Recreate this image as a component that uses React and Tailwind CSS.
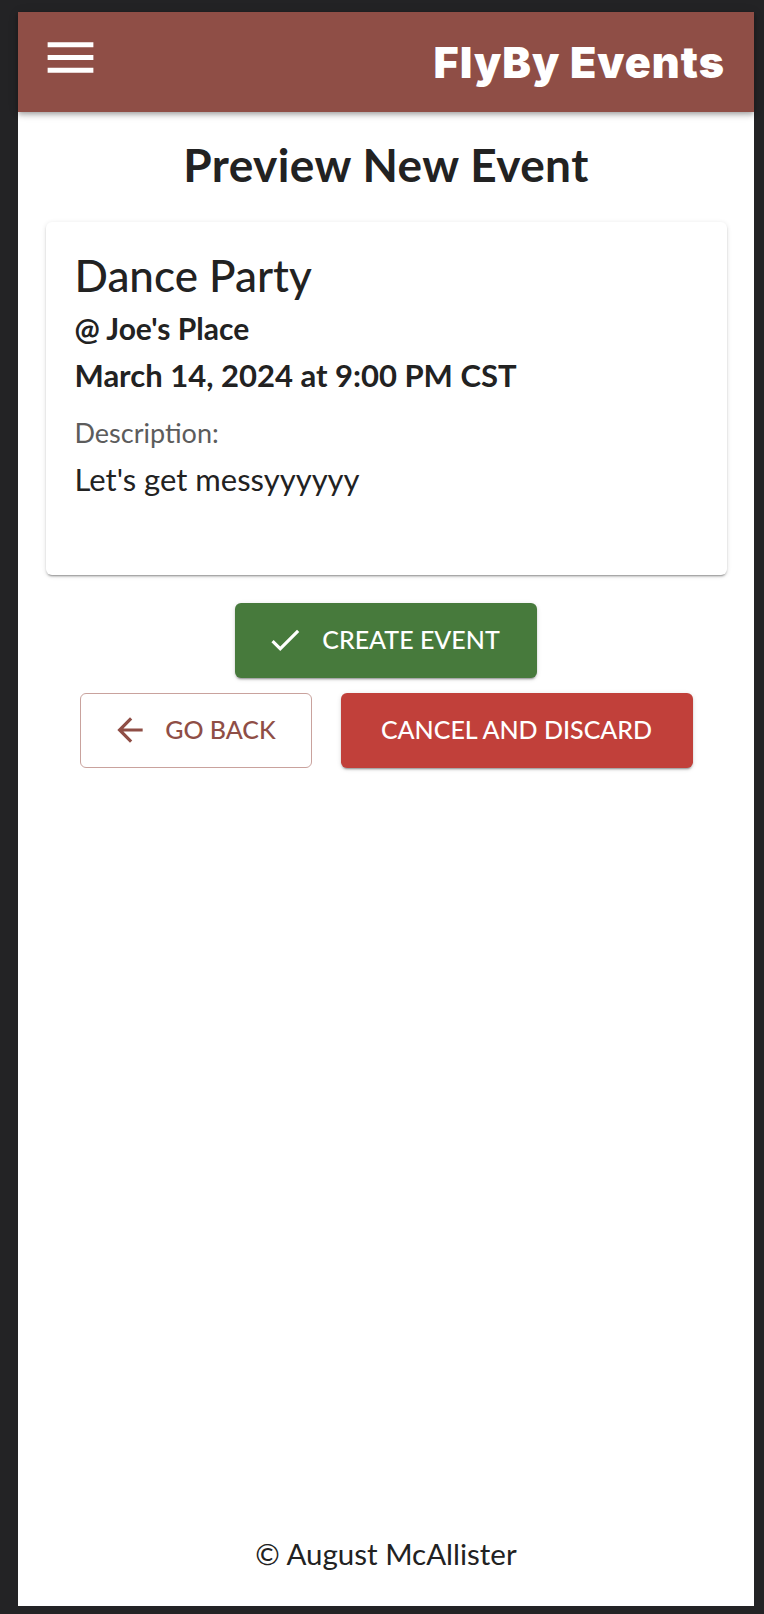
import React from "react";

const font = { fontFamily: "Lato, 'Open Sans', sans-serif" };

function MenuIcon() {
  return (
    <svg viewBox="0 0 24 24" className="w-[61px] h-[61px]" fill="white">
      <path d="M3 18h18v-2H3zm0-5h18v-2H3zm0-7v2h18V6z" />
    </svg>
  );
}

function CheckIcon() {
  return (
    <svg viewBox="0 0 24 24" className="w-[38px] h-[38px]" fill="currentColor">
      <path d="M9 16.17 4.83 12l-1.42 1.41L9 19 21 7l-1.41-1.41z" />
    </svg>
  );
}

function ArrowBackIcon() {
  return (
    <svg viewBox="0 0 24 24" className="w-[38px] h-[38px]" fill="currentColor">
      <path d="M20 11H7.83l5.59-5.59L12 4l-8 8 8 8 1.41-1.41L7.83 13H20z" />
    </svg>
  );
}

export default function App() {
  const btnShadow =
    "shadow-[0px_3px_1px_-2px_rgba(0,0,0,0.2),0px_2px_2px_0px_rgba(0,0,0,0.14),0px_1px_5px_0px_rgba(0,0,0,0.12)]";

  return (
    <div className="min-h-[1614px] bg-[#232325] pl-[18px] pr-[10px] pt-[12px] pb-[8px]" style={font}>
      <div className="bg-white min-h-[1594px] flex flex-col text-[#222222]">
        {/* barre du haut */}
        <header className="h-[100px] bg-[#8f4e46] flex items-center justify-between pl-[22px] pr-[29px] shadow-[0px_2px_4px_-1px_rgba(0,0,0,0.2),0px_4px_5px_0px_rgba(0,0,0,0.14),0px_1px_10px_0px_rgba(0,0,0,0.12)] relative z-10">
          <div className="-mt-[10px]">
            <MenuIcon />
          </div>
          <h1
            className="text-white text-[43px] font-black tracking-[1px] leading-none"
            style={{ fontFamily: "Inter, 'DejaVu Sans', sans-serif" }}
          >
            FlyBy Events
          </h1>
        </header>

        <main className="flex flex-col items-center">
          <h2 className="mt-[24px] text-[46px] font-bold leading-[1.25] tracking-[0.4px] text-[#222222]">
            Preview New Event
          </h2>

          {/* carte */}
          <div className={`mt-[28px] w-[681px] h-[353px] rounded-[6px] bg-white px-[29px] pt-[27px] ${btnShadow}`}>
            <div className="text-[44px] font-medium leading-[52px]">Dance Party</div>
            <div className="text-[30px] font-bold leading-[54px]">@ Joe's Place</div>
            <div className="text-[31px] font-bold leading-[41px]">March 14, 2024 at 9:00 PM CST</div>
            <div className="mt-[19px] text-[27px] text-[#5c5c5c] leading-[36px]">Description:</div>
            <div className="text-[31px] leading-[56px]">Let's get messyyyyyy</div>
          </div>

          {/* boutons */}
          <button
            className={`mt-[28px] w-[302px] h-[75px] rounded-[6px] bg-[#477a3c] text-white flex items-center justify-center gap-[18px] pr-[6px] text-[25px] font-medium uppercase ${btnShadow}`}
          >
            <CheckIcon />
            Create Event
          </button>

          <div className="mt-[15px] flex gap-[29px]">
            <button className="w-[232px] h-[75px] rounded-[6px] border border-[#c9a29d] text-[#8f4e46] flex items-center justify-center gap-[16px] pr-[4px] text-[25px] font-medium uppercase">
              <ArrowBackIcon />
              Go Back
            </button>
            <button
              className={`w-[352px] h-[75px] rounded-[6px] bg-[#c1403a] text-white flex items-center justify-center text-[25px] font-medium uppercase ${btnShadow}`}
            >
              Cancel and Discard
            </button>
          </div>
        </main>

        <footer className="mt-auto pb-[30px] text-center text-[29.5px] leading-[1.5]">
          © August McAllister
        </footer>
      </div>
    </div>
  );
}
